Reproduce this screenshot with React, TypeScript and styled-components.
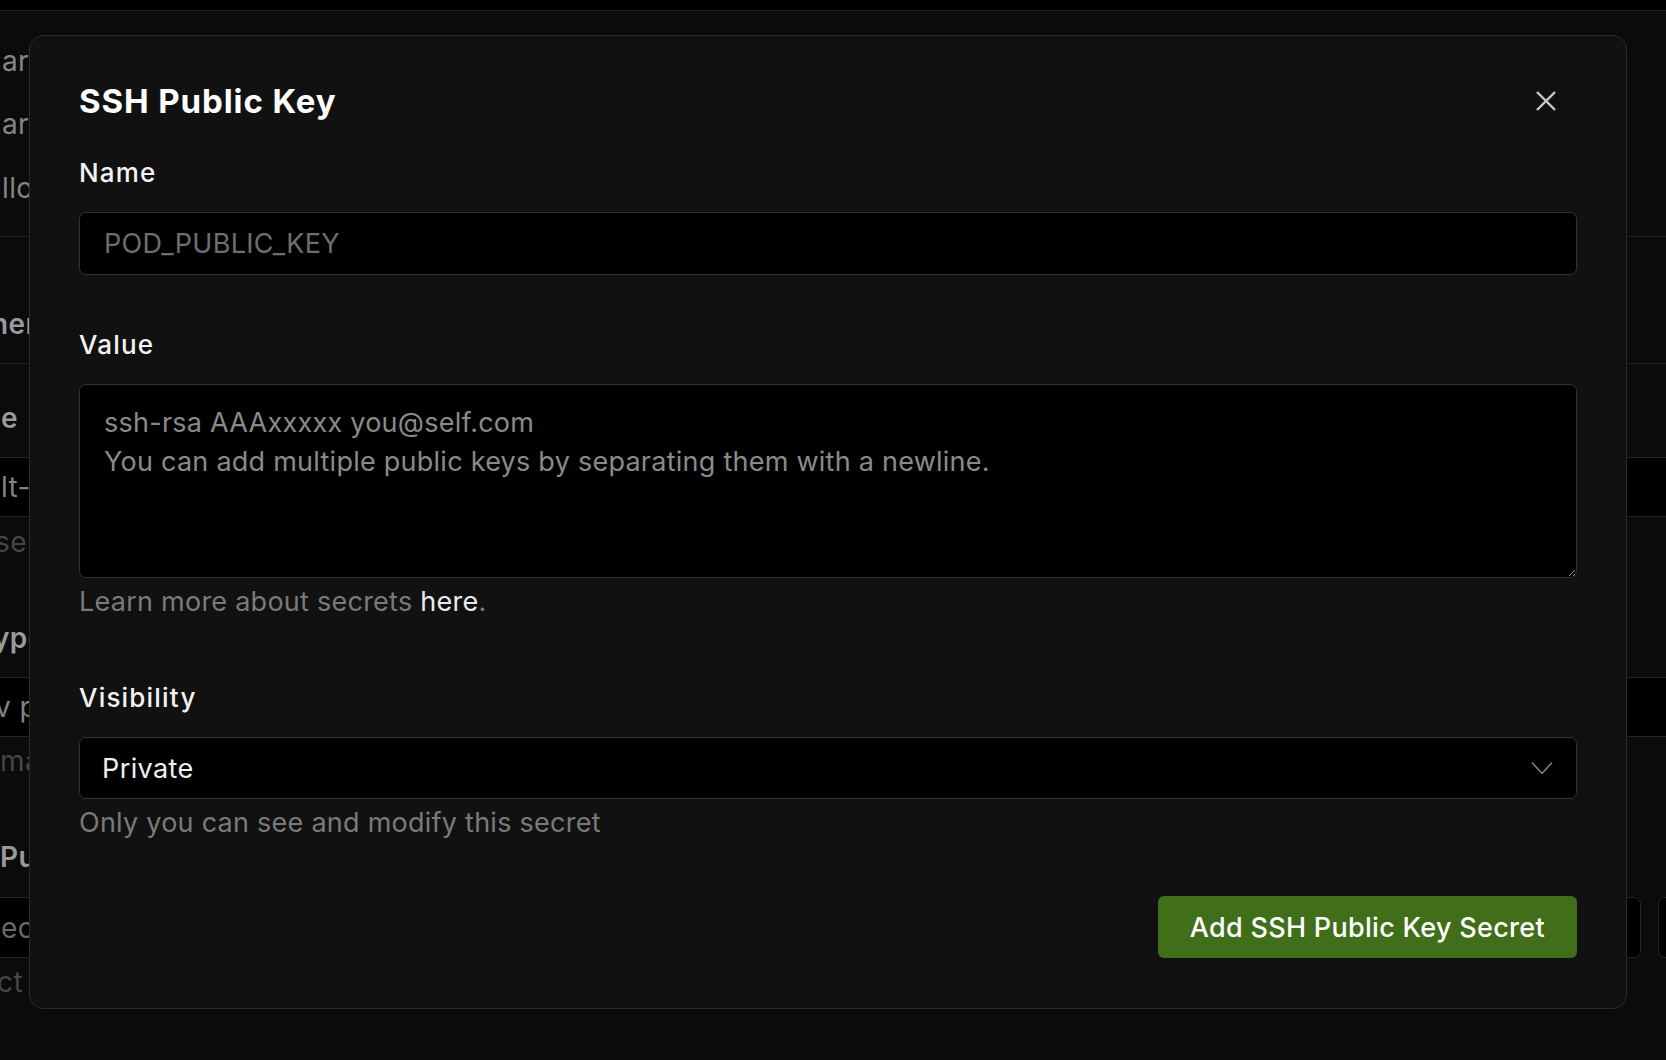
import React from "react";
import styled, { createGlobalStyle } from "styled-components";

const GlobalStyle = createGlobalStyle`
  html, body {
    margin: 0;
    padding: 0;
    background: #0b0b0b;
    font-family: Inter, "Noto Sans", "Liberation Sans", sans-serif;
    overflow: hidden;
  }
  * {
    box-sizing: border-box;
  }
`;

// ---- page behind the dialog ----

const Page = styled.div`
  width: 1666px;
  height: 1060px;
  overflow: hidden;
  background: #0b0b0b;
`;

const TopBar = styled.div`
  height: 11px;
  background: #000;
  border-bottom: 1px solid #1f1f1f;
`;

const BgContent = styled.div`
  margin-left: -20px;
  display: flex;
  flex-direction: column;
`;

type Tone = "text" | "label" | "dim" | "field" | "hint";

const toneColor: Record<Tone, string> = {
  text: "#858585",
  label: "#9a9a9a",
  dim: "#464646",
  field: "#838383",
  hint: "#6a6a6a",
};

const BgRow = styled.div<{ $mt: number; $h: number }>`
  margin-top: ${(p) => p.$mt}px;
  height: ${(p) => p.$h}px;
  display: flex;
  align-items: center;
  padding-left: 20px;
`;

const BgText = styled.span<{ $tone: Tone; $indent?: number }>`
  display: block;
  white-space: nowrap;
  font-size: 28px;
  letter-spacing: 0.4px;
  font-weight: ${(p) => (p.$tone === "label" ? 600 : 400)};
  color: ${(p) => toneColor[p.$tone]};
  margin-left: ${(p) => p.$indent ?? 0}px;
`;

const BgDivider = styled.div<{ $mt: number }>`
  margin-top: ${(p) => p.$mt}px;
  height: 1px;
  background: #202020;
`;

const BgBand = styled.div<{ $mt: number; $h: number }>`
  margin-top: ${(p) => p.$mt}px;
  height: ${(p) => p.$h}px;
  background: #000;
  border-top: 1px solid #232323;
  border-bottom: 1px solid #232323;
  display: flex;
  align-items: center;
  padding-left: 20px;
`;

const BgFieldRow = styled.div<{ $mt: number; $h: number }>`
  margin-top: ${(p) => p.$mt}px;
  height: ${(p) => p.$h}px;
  width: calc(100% + 100px);
  display: flex;
  gap: 17px;
`;

const BgInput = styled.div`
  flex: 1;
  background: #000;
  border: 1px solid #242424;
  border-radius: 0 7px 7px 0;
  display: flex;
  align-items: center;
  padding-left: 20px;
`;

const BgButton = styled.div`
  width: 108px;
  background: #000;
  border: 1px solid #242424;
  border-radius: 7px;
`;

// ---- dialog ----

const Modal = styled.div`
  position: fixed;
  left: 29px;
  top: 35px;
  width: 1598px;
  background: #111111;
  border: 1px solid #2b2b2b;
  border-radius: 14px;
  padding: 45px 49px 50px;
  display: flex;
  flex-direction: column;
`;

const Header = styled.div`
  height: 40px;
  display: flex;
  align-items: center;
  justify-content: space-between;
`;

const Title = styled.h2`
  margin: 0;
  font-size: 33px;
  line-height: 40px;
  font-weight: 700;
  letter-spacing: 0.9px;
  color: #ffffff;
`;

const CloseButton = styled.button`
  width: 40px;
  height: 40px;
  margin-right: 11px;
  padding: 0;
  border: none;
  background: transparent;
  color: #c9c9c9;
  display: flex;
  align-items: center;
  justify-content: center;
  cursor: pointer;
`;

const FieldLabel = styled.label<{ $mt: number }>`
  display: block;
  margin-top: ${(p) => p.$mt}px;
  margin-bottom: 22px;
  font-size: 26px;
  line-height: 34px;
  font-weight: 500;
  letter-spacing: 1.2px;
  color: #f3f3f3;
`;

const TextInput = styled.input`
  width: 100%;
  height: 63px;
  background: #000;
  border: 1px solid #323232;
  border-radius: 7px;
  padding: 0 24px;
  font-family: inherit;
  font-size: 27px;
  letter-spacing: 0.3px;
  color: #eeeeee;
  outline: none;

  &::placeholder {
    color: #6e6e6e;
  }
`;

const TextArea = styled.textarea`
  width: 100%;
  height: 194px;
  background: #000;
  border: 1px solid #323232;
  border-radius: 7px;
  padding: 18px 24px 14px;
  font-family: inherit;
  font-size: 27px;
  line-height: 39px;
  letter-spacing: 0.25px;
  color: #eeeeee;
  outline: none;
  resize: vertical;
  color-scheme: dark;
  display: block;

  &::placeholder {
    color: #8a8a8a;
  }
`;

const Helper = styled.div`
  margin-top: 7px;
  font-size: 27px;
  line-height: 34px;
  letter-spacing: 0.25px;
  color: #7a7a7a;
`;

const HelperLink = styled.a`
  color: #ebebeb;
  text-decoration: none;
`;

const SelectTrigger = styled.button`
  width: 100%;
  height: 62px;
  background: #000;
  border: 1px solid #323232;
  border-radius: 7px;
  padding: 0 23px 0 22px;
  display: flex;
  align-items: center;
  justify-content: space-between;
  font-family: inherit;
  font-size: 27px;
  letter-spacing: 0.4px;
  color: #f0f0f0;
  cursor: pointer;
`;

const Footer = styled.div`
  margin-top: 56px;
  display: flex;
  justify-content: flex-end;
`;

const PrimaryButton = styled.button`
  height: 62px;
  padding: 0 32px;
  border: none;
  border-radius: 6px;
  background: #416f19;
  color: #ffffff;
  font-family: inherit;
  font-size: 27px;
  font-weight: 500;
  letter-spacing: 0.3px;
  cursor: pointer;
`;

const CloseIcon = () => (
  <svg width="22" height="22" viewBox="0 0 22 22" fill="none">
    <path d="M2 2 L20 20 M20 2 L2 20" stroke="currentColor" strokeWidth="2.4" />
  </svg>
);

const ChevronIcon = () => (
  <svg width="22" height="14" viewBox="0 0 22 14" fill="none">
    <path d="M1 1.5 L11 12.5 L21 1.5" stroke="#858585" strokeWidth="1.5" />
  </svg>
);

function Background() {
  return (
    <Page>
      <TopBar />
      <BgContent>
        <BgRow $mt={19} $h={62}>
          <BgText $tone="text" $indent={2}>ar limit</BgText>
        </BgRow>
        <BgRow $mt={1} $h={62}>
          <BgText $tone="text" $indent={2}>ar volume</BgText>
        </BgRow>
        <BgRow $mt={2} $h={62}>
          <BgText $tone="text" $indent={2}>llow public access</BgText>
        </BgRow>
        <BgDivider $mt={17} />
        <BgRow $mt={56} $h={62}>
          <BgText $tone="label" $indent={-9}>her settings</BgText>
        </BgRow>
        <BgDivider $mt={8} />
        <BgRow $mt={23} $h={62}>
          <BgText $tone="label" $indent={1}>e</BgText>
        </BgRow>
        <BgBand $mt={8} $h={60}>
          <BgText $tone="field" $indent={1}>lt-runtime</BgText>
        </BgBand>
        <BgRow $mt={0} $h={50}>
          <BgText $tone="dim" $indent={-5}>se a runtime image</BgText>
        </BgRow>
        <BgRow $mt={40} $h={62}>
          <BgText $tone="label" $indent={-7}>ypo</BgText>
        </BgRow>
        <BgBand $mt={8} $h={60}>
          <BgText $tone="field" $indent={-5}>v pod</BgText>
        </BgBand>
        <BgRow $mt={0} $h={48}>
          <BgText $tone="dim" $indent={0}>machine type</BgText>
        </BgRow>
        <BgRow $mt={41} $h={62}>
          <BgText $tone="label" $indent={0}>Public Key</BgText>
        </BgRow>
        <BgFieldRow $mt={9} $h={61}>
          <BgInput>
            <BgText $tone="hint" $indent={0}>ect a secret</BgText>
          </BgInput>
          <BgButton />
        </BgFieldRow>
        <BgRow $mt={0} $h={48}>
          <BgText $tone="dim" $indent={-3}>ct a key to use</BgText>
        </BgRow>
      </BgContent>
    </Page>
  );
}

export default function App() {
  return (
    <>
      <GlobalStyle />
      <Background />
      <Modal role="dialog">
        <Header>
          <Title>SSH Public Key</Title>
          <CloseButton aria-label="Close">
            <CloseIcon />
          </CloseButton>
        </Header>

        <FieldLabel $mt={35} htmlFor="secret-name">
          Name
        </FieldLabel>
        <TextInput id="secret-name" placeholder="POD_PUBLIC_KEY" />

        <FieldLabel $mt={53} htmlFor="secret-value">
          Value
        </FieldLabel>
        <TextArea
          id="secret-value"
          placeholder={
            "ssh-rsa AAAxxxxx you@self.com\nYou can add multiple public keys by separating them with a newline."
          }
        />
        <Helper>
          Learn more about secrets <HelperLink href="#">here</HelperLink>.
        </Helper>

        <FieldLabel $mt={62}>Visibility</FieldLabel>
        <SelectTrigger>
          <span>Private</span>
          <ChevronIcon />
        </SelectTrigger>
        <Helper>Only you can see and modify this secret</Helper>

        <Footer>
          <PrimaryButton>Add SSH Public Key Secret</PrimaryButton>
        </Footer>
      </Modal>
    </>
  );
}
